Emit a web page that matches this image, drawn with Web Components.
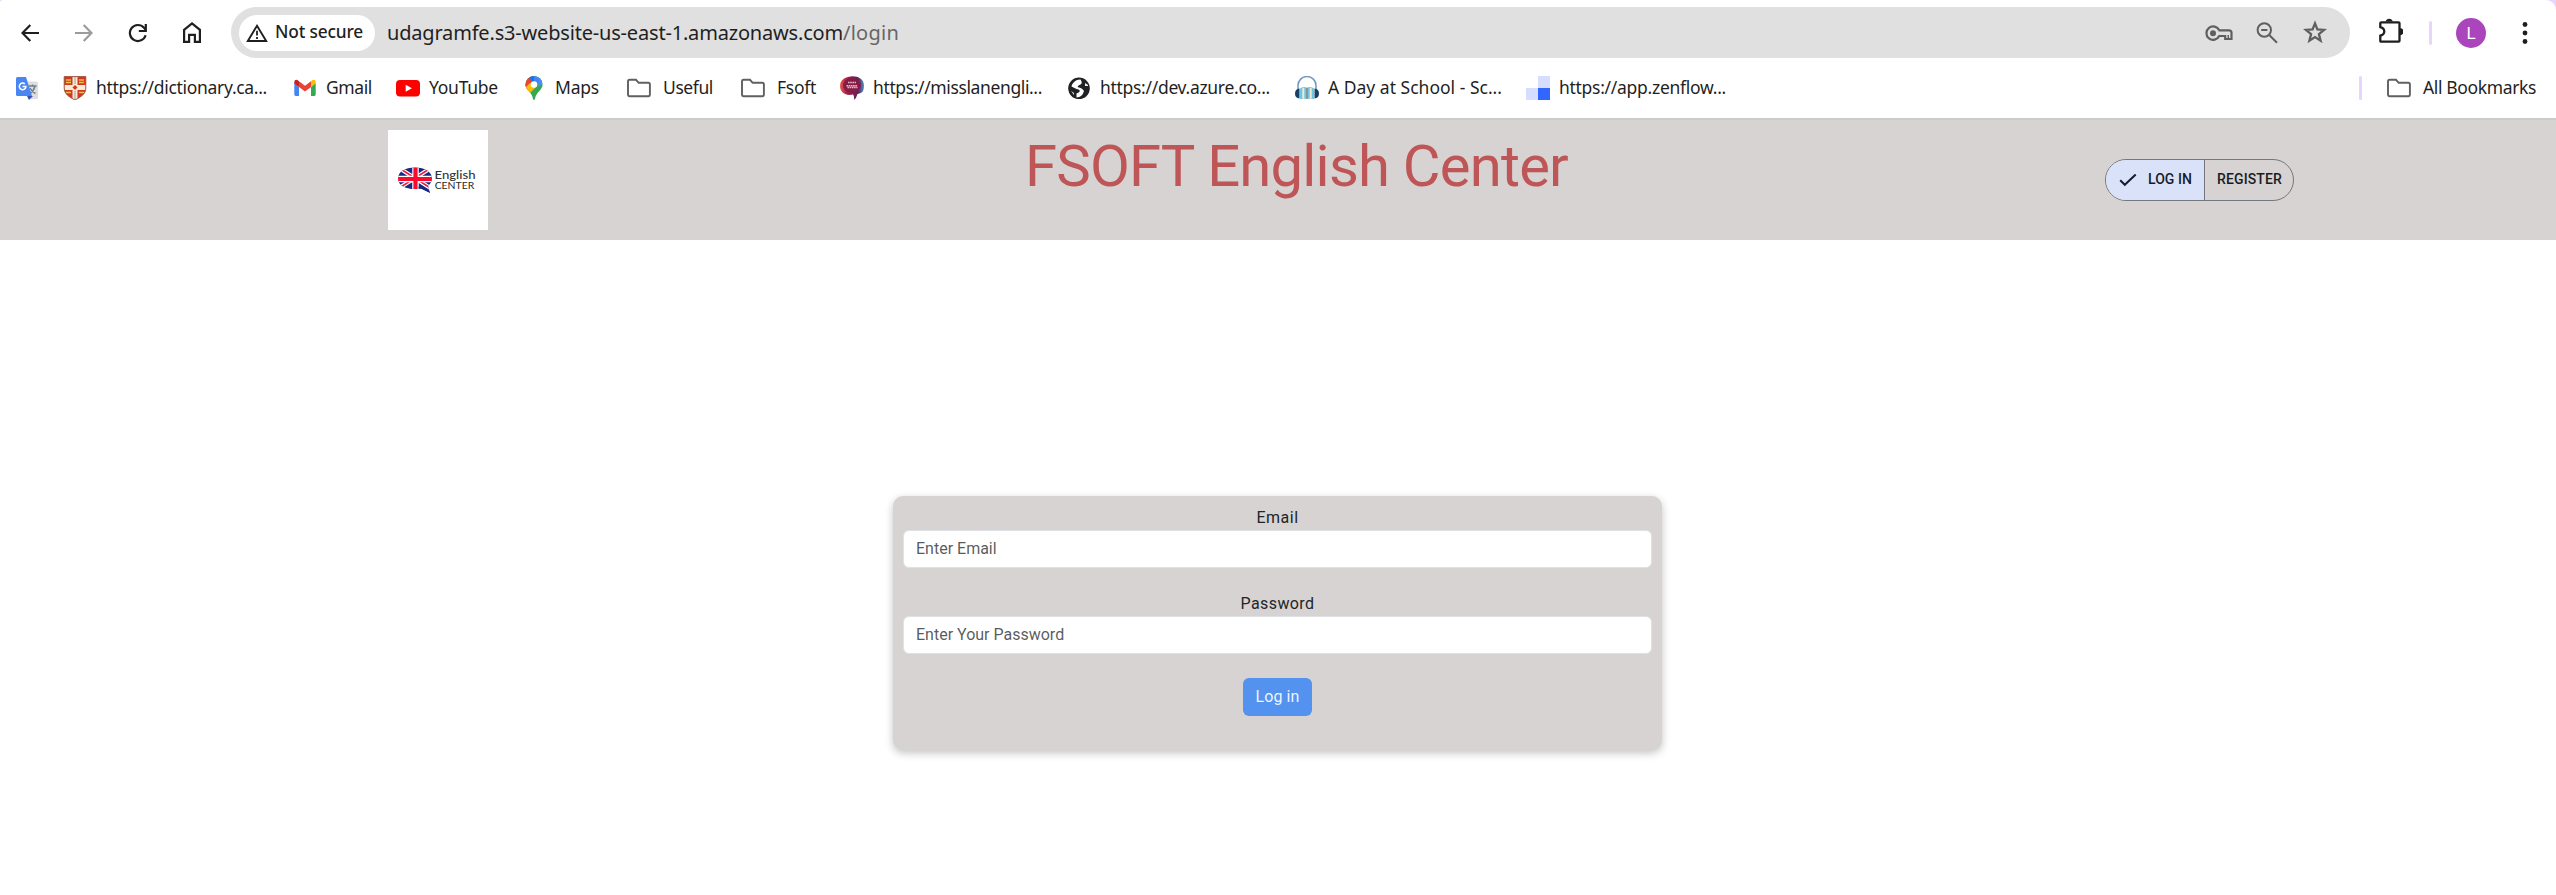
<!DOCTYPE html>
<html lang="en">
<head>
<meta charset="utf-8">
<title>FSOFT English Center</title>
<style>
html,body{margin:0;height:100%;background:#fff;overflow:hidden}
body{display:flex;flex-direction:column;font-family:"Noto Sans","Open Sans",sans-serif;color:#1f1f1f}
</style>
</head>
<body>
<browser-chrome></browser-chrome>
<site-header></site-header>
<login-page></login-page>
<script>
const define = (name, html, setup) => customElements.define(name, class extends HTMLElement {
  connectedCallback() {
    if (this.shadowRoot) return;
    const t = document.createElement('template');
    t.innerHTML = html;
    this.attachShadow({ mode: 'open' }).append(t.content.cloneNode(true));
    if (setup) setup(this, this.shadowRoot);
  }
});

// Text run tracked to occupy exactly the given width.
define('fit-text', `<style>:host{display:block;flex:none;white-space:pre}span{display:inline-block}</style><span><slot></slot></span>`, (el, root) => {
  const w = +el.getAttribute('w');
  el.style.width = w + 'px';
  const span = root.querySelector('span');
  const nat = span.getBoundingClientRect().width;
  span.style.letterSpacing = ((w - nat) / el.textContent.length) + 'px';
});

const ICONS = {
  back: [18, 18, `<path d="M18 9H2M9.3 1 1.5 9l7.800 8" fill="none" stroke="#1f1f1f" stroke-width="2.200"/>`],
  forward: [18, 18, `<path d="M0 9h16M8.700 1l7.800 8-7.800 8" fill="none" stroke="#9c9c9c" stroke-width="2.200"/>`],
  reload: [20, 20, `<path d="M17.600 12.200A8 8 0 1 1 16 4.800l1.600 1.700" fill="none" stroke="#1f1f1f" stroke-width="2.200"/><path d="M17.800 1v7h-7" fill="none" stroke="#1f1f1f" stroke-width="2.200"/>`],
  home: [18, 21, `<path d="M1.100 7.800 9 1.500l7.900 6.300v12.100h-5v-7H6.100v7h-5z" fill="none" stroke="#1f1f1f" stroke-width="2.200"/>`],
  warn: [22, 18, `<path d="M11 1.800 20.200 17H1.800z" fill="none" stroke="#1f1f1f" stroke-width="1.900"/><path d="M11 6.800v4.800M11 13v2" stroke="#1f1f1f" stroke-width="1.800"/>`],
  key: [28, 16, `<g fill="none" stroke="#5f5f5f" stroke-width="2.200"><path d="M14.200 5.300A6.700 6.700 0 1 0 14.200 11H19v-.8M13.600 5.300H24a2.500 2.500 0 0 1 2.500 2.500v6.200h-6.300v-4"/><path d="M23.300 10v3.500" stroke-width="1.400"/></g><circle cx="8" cy="8.200" r="3" fill="#5f5f5f"/>`],
  zoomout: [22, 22, `<g fill="none" stroke="#5f5f5f" stroke-width="2"><circle cx="8.300" cy="8" r="6.700"/><path d="m13 12.800 8 8M5.200 8h6.200"/></g>`],
  star: [24, 24, `<path d="m12 3.300 2.400 6.100 6.700.5-5.200 4.200 1.700 6.500L12 17l-5.600 3.600 1.700-6.500-5.200-4.200 6.700-.5z" fill="none" stroke="#5f5f5f" stroke-width="2.300"/>`],
  puzzle: [25, 25, `<path d="M3.300 4.300h17.200q1 0 1 1v17.400q0 1-1 1H3.300q-1 0-1-1v-5c5.300-1.500 5.300-7 0-8.500V5.300q0-1 1-1z" fill="none" stroke="#1f1f1f" stroke-width="2.300"/><path d="M7.700 3.500a3.600 3.600 0 0 1 7 0zM22 10.200a3.300 3.300 0 0 1 0 7z" fill="#1f1f1f"/>`],
  dots: [6, 24, `<g fill="#1f1f1f"><circle cx="3" cy="3.500" r="2.400"/><circle cx="3" cy="12" r="2.400"/><circle cx="3" cy="20.500" r="2.400"/></g>`],
  folder: [24, 24, `<path d="M2.500 3.800H9l2.700 3H21.300q1.600 0 1.600 1.600v10.200q0 1.600-1.600 1.600H2.600Q1 20.200 1 18.600V5.400Q1 3.800 2.500 3.800z" fill="none" stroke="#5f6062" stroke-width="1.900"/>`],
  check: [18, 14, `<path d="m1.200 7.300 4.600 4.500L16.700 1.500" fill="none" stroke="#151c2c" stroke-width="2"/>`],
  translate: [24, 24, `<path d="M10 5.500h12.500q1.500 0 1.500 1.500v14.500q0 1.500-1.500 1.500H14z" fill="#dedede"/><path d="M14.500 10h8M18.500 8.500V10M21 10q-1 4.500-5 7.500M16 12q2 4 5.500 5.500" fill="none" stroke="#6d7f88" stroke-width="1.400"/><path d="M13 20h6l-4 4z" fill="#3652b7"/><path d="M3.500 1H12l6 19H3.500Q2 20 2 18.500v-16Q2 1 3.500 1z" fill="#4a86f0"/><path d="M10.800 7.900a3.300 3.300 0 1 0 1.100 2.700H8.500" fill="none" stroke="#fff" stroke-width="1.500"/>`],
  shield: [24, 24, `<defs><clipPath id="s"><path d="M1.200.6h21.600V12c0 6-5 9-10.800 12C6.200 21 1.200 18 1.200 12z"/></clipPath></defs><g clip-path="url(#s)"><path d="M0 0h24v24H0z" fill="#d3381f"/><path d="M9.500 0h5v24h-5zM0 9h24v5H0z" fill="#f7ead7"/><path d="M11.300 0h1.400v8h-1.400zM11.300 15h1.400v8h-1.400z" fill="#b9b3b0"/><path d="m12 9 2.500 2.500L12 14l-2.500-2.500z" fill="#d3381f"/><path d="M3 4h5M3 6.500h5M16 4h5M16 6.500h5M3 16.500h5M16 16.500h5" stroke="#efbd4f" stroke-width="1.300"/></g><path d="M1.200.6h21.600V12c0 6-5 9-10.800 12C6.200 21 1.200 18 1.200 12z" fill="none" stroke="#98513a" stroke-width=".9"/>`],
  gmail: [24, 24, `<path d="M1.300 7v11.600Q1.300 20 2.700 20H6v-9z" fill="#4285f4"/><path d="M22.700 7v11.600q0 1.400-1.400 1.400H18v-9z" fill="#34a853"/><path d="M18 5.300V11l4.700-3.500V6c0-2-2-2.900-3.500-1.700z" fill="#fbbc04"/><path d="M6 5.300V11L1.300 7.500V6c0-2 2-2.900 3.500-1.700z" fill="#c5221f"/><path d="M6 5.200 12 9.700l6-4.500V11l-6 4.500L6 11z" fill="#ea4335"/>`],
  youtube: [24, 24, `<rect y="4" width="24" height="16.500" rx="4" fill="#f00"/><path d="m9.700 8.800 6.200 3.500-6.200 3.500z" fill="#fff"/>`],
  maps: [24, 24, `<defs><clipPath id="m"><path d="M12 0a8.600 8.600 0 0 1 8.600 8.600c0 5.500-6.600 7.400-7.600 14.400q-1 2-2 0c-1-7-7.600-8.900-7.600-14.400A8.600 8.600 0 0 1 12 0z"/></clipPath></defs><g clip-path="url(#m)"><path d="M0 0h24v24H0z" fill="#34a853"/><path d="M5 0h19v5L12 9z" fill="#4285f4"/><path d="M18 0h6v5l-8 6z" fill="#4d90f5"/><path d="M0 0h6l7 7-8 9H0z" fill="#ea4335"/><path d="M6 0h6v8z" fill="#1a73e8"/><path d="m3 12 5-5 7 3-8 8z" fill="#fbbc04"/></g><circle cx="12" cy="8.500" r="3.300" fill="#fff"/>`],
  bubble: [24, 24, `<defs><linearGradient id="b"><stop stop-color="#e45b4e"/><stop offset=".3" stop-color="#a91c42"/><stop offset=".75" stop-color="#5c2259"/><stop offset="1" stop-color="#5291d0"/></linearGradient></defs><path d="M8 1C14-1 24 1 24 9.500S20 17 17.500 18q-1 4-3.500 6 .5-4-1-5.500C6 20 0 17 0 10Q0 3 8 1z" fill="url(#b)"/><ellipse cx="12" cy="9.500" rx="9" ry="7.600" fill="#861c46"/><path d="M8 6.500h8M6.500 9.800h11M7.500 11.500h10" stroke="#e2bcca" stroke-width="1.500" stroke-dasharray="1.600 .6"/>`],
  globe: [24, 24, `<circle cx="12" cy="12.300" r="10.800" fill="#202124"/><path d="M13 3.500C9 3.500 5 7 4.500 10.500l5 2.500q2.500 0 3.500 2-1 1.500-3.500 2.500v4q6-.5 7.500-6.500-1.500-3-6.500-4 .5-2 3-2.500 2.500-1.500 0-5z" fill="#fff"/><path d="M18 7v3h3v-1zM4 15l3 4v-2z" fill="#eee"/>`],
  headphones: [24, 24, `<path d="M3 14V9.500a9 9 0 0 1 18 0V14" fill="none" stroke="#7396bd" stroke-width="1.500"/><path d="M5 12.500q4-2.500 7-.8 3-1.700 7 .8V23h-3q-4-1-8 0H5z" fill="#6cc7e5"/><path d="M8.300 11.800v11M15.700 11.800v11" stroke="#f1e8cf" stroke-width="2"/><path d="M12 12v11" stroke="#8b8784" stroke-width="1.500"/><path d="M4.500 12.500v10Q0 22 0 17.500t4.500-5zM19.500 12.500v10q4.500-.5 4.500-5t-4.500-5z" fill="#183f67"/>`],
  zen: [24, 24, `<path d="M12 0h12v12H12zM0 12h12v12H0z" fill="#d5deff"/><path d="M12 12h12v12H12z" fill="#3366ff"/>`],
  brand: [100, 100, `<defs><clipPath id="u"><path d="M27 37.500c10 0 17 4.500 17 11 0 3-1.500 5.500-4 7.300l2 7.200-9-4.500q-3 .6-6 .6c-10 0-17-4-17-10.600s7-11 17-11z"/></clipPath></defs><path d="M0 0h100v100H0z" fill="#fff"/><g clip-path="url(#u)"><path d="M8 36h38v29H8z" fill="#162a80"/><path d="m8 36 39 25M46 36 8 60" stroke="#fff" stroke-width="4"/><path d="m8 36 39 25M46 36 8 60" stroke="#f0183e" stroke-width="1.700"/><path d="M27.500 36v23M8 49h38" stroke="#fff" stroke-width="6.500"/><path d="M27.500 36v23M8 49h38" stroke="#fa0a2f" stroke-width="4.200"/><path d="m30 58 3-2.500 11 8z" fill="#162a80"/></g><text x="46.500" y="48.500" font-family="Lato,sans-serif" font-size="12" font-weight="500" textLength="41" lengthAdjust="spacingAndGlyphs" fill="#333337">English</text><text x="46.700" y="59" font-family="Lato,sans-serif" font-size="8.600" textLength="39.500" lengthAdjust="spacingAndGlyphs" fill="#2b2b2b">CENTER</text>`]
};
define('ui-icon', `<style>:host{display:block;flex:none}svg{display:block}</style>`, (el, root) => {
  const [w, h, body] = ICONS[el.getAttribute('name')];
  const t = document.createElement('template');
  t.innerHTML = `<svg width="${w}" height="${h}" viewBox="0 0 ${w} ${h}">${body}</svg>`;
  root.append(t.content);
});

define('book-mark', `<style>
:host{display:flex;align-items:center;flex:none;height:24px;font-size:17.500px;line-height:24px;gap:9px}
:host([icon="folder"]){gap:12px}
fit-text{margin-top:-2px}
</style>`, (el, root) => {
  const t = document.createElement('template');
  t.innerHTML = `<ui-icon name="${el.getAttribute('icon')}"></ui-icon>` +
    (el.textContent ? `<fit-text w="${el.getAttribute('w')}">${el.textContent}</fit-text>` : '');
  root.append(t.content);
  el.style.marginLeft = el.getAttribute('ml') + 'px';
});

define('browser-chrome', `<style>
:host{display:block;flex:none;height:118px;background:#e8d5fb}
.sheet{height:118px;background:#fff;border-radius:3px 10px 0 0;display:flex;flex-direction:column}
.bar{display:flex;align-items:center;height:51px;padding-top:7px}
.nav{display:flex;align-items:center;width:231px;flex:none;padding-left:21px;box-sizing:border-box}
.omni{display:flex;align-items:center;width:2119px;height:51px;flex:none;background:#e0e0e0;border-radius:26px;padding-left:8px;box-sizing:border-box;font-size:20px;line-height:28px}
.chip{display:flex;align-items:center;width:136px;height:36px;border-radius:18px;background:#fff;padding-left:7px;box-sizing:border-box;margin-right:12px;font-size:17.300px;font-weight:500;line-height:24px;flex:none}
.chip fit-text{margin:-1px 0 0 7px}
.path{color:#666}
.space{flex:1}
.sep{width:3px;height:24px;border-radius:2px;background:#e9d4fd;flex:none}
.avatar{width:30px;height:30px;border-radius:50%;background:#ab45bb;color:#fff;font:17px/31px Roboto,sans-serif;text-align:center;margin-left:24px;flex:none}
.marks{display:flex;align-items:center;height:24px;margin-top:18px}
</style>
<div class="sheet">
<div class="bar">
<div class="nav"><ui-icon name="back"></ui-icon><ui-icon name="forward" style="margin-left:36px"></ui-icon><ui-icon name="reload" style="margin-left:35px"></ui-icon><ui-icon name="home" style="margin-left:35px"></ui-icon></div>
<div class="omni"><div class="chip"><ui-icon name="warn"></ui-icon><fit-text w="88">Not secure</fit-text></div>
<fit-text w="456">udagramfe.s3-website-us-east-1.amazonaws.com</fit-text><fit-text class="path" w="56">/login</fit-text>
<div class="space"></div><ui-icon name="key"></ui-icon><ui-icon name="zoomout" style="margin-left:23px"></ui-icon><ui-icon name="star" style="margin:0 23px 2px 25px"></ui-icon></div>
<ui-icon name="puzzle" style="margin:0 0 4px 28px"></ui-icon><div class="sep" style="margin-left:26px"></div><div class="avatar">L</div><ui-icon name="dots" style="margin-left:36px"></ui-icon>
</div>
<div class="marks">
<book-mark icon="translate" ml="14"></book-mark>
<book-mark icon="shield" ml="25" w="171">https://dictionary.ca...</book-mark>
<book-mark icon="gmail" ml="26" w="46">Gmail</book-mark>
<book-mark icon="youtube" ml="24" w="69">YouTube</book-mark>
<book-mark icon="maps" ml="24" w="44">Maps</book-mark>
<book-mark icon="folder" ml="28" w="50">Useful</book-mark>
<book-mark icon="folder" ml="28" w="39">Fsoft</book-mark>
<book-mark icon="bubble" ml="24" w="169">https://misslanengli...</book-mark>
<book-mark icon="globe" ml="25" w="170">https://dev.azure.co...</book-mark>
<book-mark icon="headphones" ml="25" w="174">A Day at School - Sc...</book-mark>
<book-mark icon="zen" ml="24" w="167">https://app.zenflow...</book-mark>
<div class="space"></div><div class="sep"></div>
<book-mark icon="folder" ml="25" w="113" style="margin-right:20px">All Bookmarks</book-mark>
</div>
</div>`);

define('mode-switch', `<style>
:host{display:flex;flex:none;box-sizing:border-box;width:189px;height:42px;border:1px solid #757780;border-radius:21px;overflow:hidden;font:500 14px/38px Roboto,sans-serif;color:#1b1b1f}
.on{display:flex;align-items:center;width:99px;background:#dae2f9;border-right:1px solid #757780;padding-left:13px;box-sizing:border-box;color:#151c2c}
.off{padding-left:12px}
.on fit-text{margin:-2px 0 0 11px}
</style><div class="on"><ui-icon name="check"></ui-icon><fit-text w="44">LOG IN</fit-text></div><div class="off"><fit-text w="65">REGISTER</fit-text></div>`);

define('site-header', `<style>
:host{display:flex;flex:none;box-sizing:border-box;height:122px;background:#d7d3d2;border-top:2px solid #cbcbcb;align-items:flex-start;padding:10px 262px 0 388px;font-family:Roboto,sans-serif}
h1{margin:2px 0 0 537px;font-weight:400;font-size:58px;line-height:68px;color:#be5556}
mode-switch{margin:29px 0 0 auto}
</style><ui-icon name="brand"></ui-icon><h1><fit-text w="543">FSOFT English Center</fit-text></h1><mode-switch></mode-switch>`);

define('form-field', `<style>
:host{display:block;font:16px/24px Roboto,sans-serif}
label{display:flex;justify-content:center;height:24px;color:#212529}
input{display:block;box-sizing:border-box;width:100%;height:38px;border:1px solid #dee2e6;border-radius:6px;background:#fff;padding:0 12px 2px;font:16px Roboto,sans-serif}
input::placeholder{color:rgba(33,37,41,.75);opacity:1}
</style><label></label><input>`, (el, root) => {
  root.querySelector('label').innerHTML = `<fit-text w="${el.getAttribute('w')}">${el.getAttribute('label')}</fit-text>`;
  root.querySelector('input').placeholder = el.getAttribute('hint');
});

define('login-page', `<style>
:host{display:flex;flex:1;justify-content:center;align-items:flex-start;padding:256px 1px 0 0}
.card{box-sizing:border-box;width:769px;height:254px;background:#d7d3d2;border-radius:10px;box-shadow:0 3px 8px rgba(0,0,0,.24);padding:10px 10px 0}
form-field{margin-bottom:24px}
button{display:flex;justify-content:center;align-items:center;width:69px;height:38px;margin:0 auto;border:0;border-radius:6px;background:#5392ef;color:#eef4fd;font:400 16px Roboto,sans-serif;padding:0 0 2px}
</style><div class="card">
<form-field label="Email" hint="Enter Email" w="42"></form-field>
<form-field label="Password" hint="Enter Your Password" w="74"></form-field>
<button type="button"><fit-text w="44">Log in</fit-text></button>
</div>`);
</script>
</body>
</html>
